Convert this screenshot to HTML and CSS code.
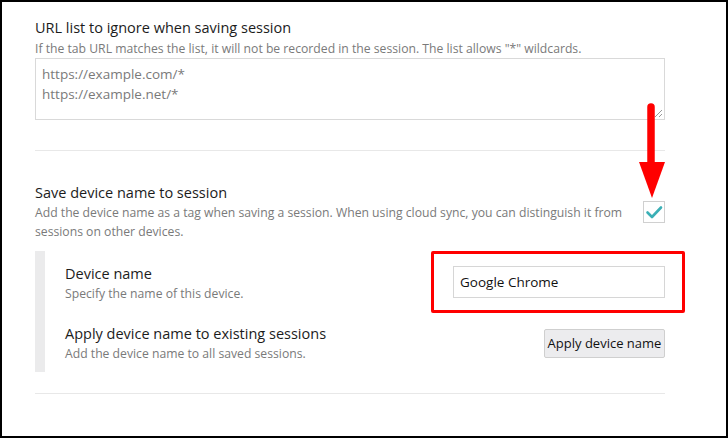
FILE: index.html
```html
<!DOCTYPE html>
<html>
<head>
<meta charset="utf-8">
<link rel="stylesheet" href="styles.css">
</head>
<body>
<div class="frame">
  <div class="content">
    <section class="option">
      <div class="title">URL list to ignore when saving session</div>
      <div class="desc">If the tab URL matches the list, it will not be recorded in the session. The list allows "*" wildcards.</div>
      <div class="textarea">
        <div>https://example.com/*</div>
        <div>https://example.net/*</div>
        <svg class="grip" width="10" height="10" viewBox="0 0 10 10"><path d="M9 2 L2 9 M9 6 L6 9" stroke="#999" stroke-width="1"/></svg>
      </div>
    </section>
    <hr class="sep">
    <section class="option row">
      <div class="text">
        <div class="title">Save device name to session</div>
        <div class="desc">Add the device name as a tag when saving a session. When using cloud sync, you can distinguish it from sessions on other devices.</div>
      </div>
      <div class="checkbox">
        <svg width="20" height="20" viewBox="0 0 20 20"><path d="M3.5 10.5 L8 15 L17 5.5" fill="none" stroke="#3bb0b6" stroke-width="2.6" stroke-linecap="round" stroke-linejoin="round"/></svg>
      </div>
    </section>
    <div class="child">
      <div class="child-row">
        <div class="text">
          <div class="title">Device name</div>
          <div class="desc">Specify the name of this device.</div>
        </div>
        <div class="input">Google Chrome</div>
      </div>
      <div class="child-row">
        <div class="text">
          <div class="title">Apply device name to existing sessions</div>
          <div class="desc">Add the device name to all saved sessions.</div>
        </div>
        <div class="button">Apply device name</div>
      </div>
    </div>
    <hr class="sep bottom">
  </div>
  <div class="highlight"></div>
  <svg class="arrow" width="30" height="100" viewBox="0 0 30 100">
    <path d="M13 4 L13 62" stroke="#ff0000" stroke-width="7.5" stroke-linecap="round"/>
    <path d="M1 59 L27 59 L14 95 Z" fill="#ff0000"/>
  </svg>
</div>
</body>
</html>
```
FILE: styles.css
```css
* { box-sizing: border-box; }
html, body { margin: 0; padding: 0; background: #fff; }
body { font-family: "Open Sans", "Noto Sans", sans-serif; }
.frame {
  position: relative;
  width: 728px;
  height: 438px;
  border: 2px solid #000;
  background: #fff;
  overflow: hidden;
}
.content {
  width: 630px;
  margin-left: 33px;
  padding-top: 15px;
}
.title {
  font-size: 14.5px;
  line-height: 21px;
  color: #1c1c1c;
}
.desc {
  margin-top: 1px;
  font-size: 12.2px;
  line-height: 19px;
  color: #7a7a7a;
}
.textarea {
  position: relative;
  height: 62px;
  border: 1px solid #d9d9d9;
  padding: 5px 6px;
  font-size: 13.5px;
  line-height: 20px;
  color: #7a7a7a;
}
.grip { position: absolute; right: 1px; bottom: 1px; }
.sep {
  border: 0;
  border-top: 1px solid #e8e8e8;
  margin: 30px 0 0 0;
  height: 0;
}
.row {
  display: flex;
  align-items: center;
  justify-content: space-between;
  margin-top: 31px;
}
.row .text { width: 604px; }
.row .desc { margin-top: 0; }
.checkbox {
  width: 22px;
  height: 22px;
  border: 1px solid #d0d0d0;
  display: flex;
  align-items: center;
  justify-content: center;
}
.child {
  margin-top: 10px;
  border-left: 10px solid #ebebec;
  padding: 12px 0 8px 20px;
}
.child-row {
  display: flex;
  align-items: center;
  justify-content: space-between;
}
.child .desc { margin-top: 0; line-height: 20px; }
.child-row + .child-row { margin-top: 19px; }
.input {
  width: 212px;
  height: 32px;
  margin-top: -3px;
  border: 1px solid #d6d6d6;
  padding: 0 6px;
  font-size: 13.5px;
  line-height: 30px;
  color: #111;
}
.button {
  width: 121px;
  height: 29px;
  border: 1px solid #cfcfcf;
  background: #ececee;
  font-size: 13px;
  line-height: 27px;
  text-align: center;
  color: #111;
  border-radius: 2px;
}
.sep.bottom { margin-top: 21px; }
.highlight {
  position: absolute;
  left: 429px;
  top: 249px;
  width: 254px;
  height: 62px;
  border: 3px solid #ff0000;
  border-radius: 2px;
}
.arrow {
  position: absolute;
  left: 636px;
  top: 101px;
}
```
